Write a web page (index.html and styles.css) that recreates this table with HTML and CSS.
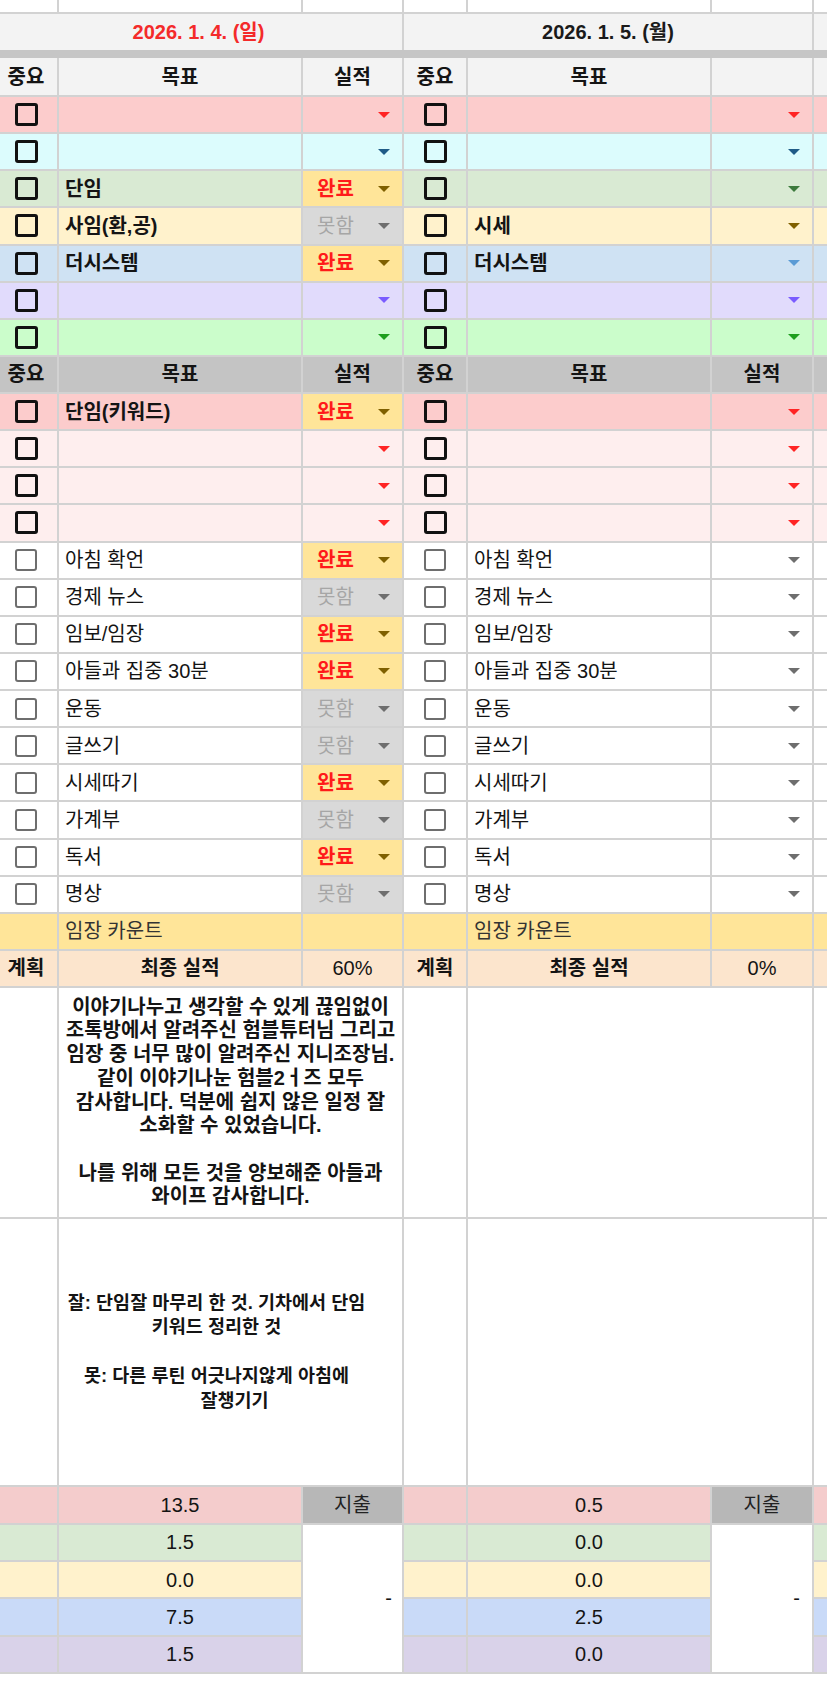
FILE: index.html
```html
<!DOCTYPE html>
<html lang="ko">
<head>
<meta charset="utf-8">
<title>Sheet</title>
<link rel="stylesheet" href="styles.css">
</head>
<body>
<div class="sheet">
  <div class="grid top">
    <div class="c"></div><div class="c"></div><div class="c"></div><div class="c"></div><div class="c"></div><div class="c"></div><div class="c"></div>
    <div class="c hd ctr span3 date sun">2026. 1. 4. (일)</div>
    <div class="c hd ctr span3 date">2026. 1. 5. (월)</div>
    <div class="c hd"></div>
  </div>
  <div class="bar"></div>
  <div class="grid main">
    <!-- header 1 -->
    <div class="c hd ctr b">중요</div><div class="c hd ctr b">목표</div><div class="c hd ctr b">실적</div>
    <div class="c hd ctr b">중요</div><div class="c hd ctr b">목표</div><div class="c hd"></div>
    <div class="c hd"></div>

    <!-- T1 pink -->
    <div class="c ck pk"><span class="cb"></span></div><div class="c pk"></div><div class="c st pk"><i class="tri t-red"></i></div>
    <div class="c ck pk"><span class="cb"></span></div><div class="c pk"></div><div class="c st pk"><i class="tri t-red"></i></div>
    <div class="c pk"></div>
    <!-- T2 cyan -->
    <div class="c ck cy"><span class="cb"></span></div><div class="c cy"></div><div class="c st cy"><i class="tri t-teal"></i></div>
    <div class="c ck cy"><span class="cb"></span></div><div class="c cy"></div><div class="c st cy"><i class="tri t-teal"></i></div>
    <div class="c cy"></div>
    <!-- T3 green -->
    <div class="c ck gr"><span class="cb"></span></div><div class="c gr goal b">단임</div><div class="c st yl"><span class="done">완료</span><i class="tri t-brn"></i></div>
    <div class="c ck gr"><span class="cb"></span></div><div class="c gr"></div><div class="c st gr"><i class="tri t-dgr"></i></div>
    <div class="c gr"></div>
    <!-- T4 yellow -->
    <div class="c ck ye"><span class="cb"></span></div><div class="c ye goal b">사임(환,공)</div><div class="c st gy"><span class="miss">못함</span><i class="tri t-gray"></i></div>
    <div class="c ck ye"><span class="cb"></span></div><div class="c ye goal b">시세</div><div class="c st ye"><i class="tri t-brn"></i></div>
    <div class="c ye"></div>
    <!-- T5 blue -->
    <div class="c ck bl"><span class="cb"></span></div><div class="c bl goal b">더시스템</div><div class="c st yl"><span class="done">완료</span><i class="tri t-brn"></i></div>
    <div class="c ck bl"><span class="cb"></span></div><div class="c bl goal b">더시스템</div><div class="c st bl"><i class="tri t-lbl"></i></div>
    <div class="c bl"></div>
    <!-- T6 purple -->
    <div class="c ck pu"><span class="cb"></span></div><div class="c pu"></div><div class="c st pu"><i class="tri t-vio"></i></div>
    <div class="c ck pu"><span class="cb"></span></div><div class="c pu"></div><div class="c st pu"><i class="tri t-vio"></i></div>
    <div class="c pu"></div>
    <!-- T7 light green -->
    <div class="c ck lg"><span class="cb"></span></div><div class="c lg"></div><div class="c st lg"><i class="tri t-grn"></i></div>
    <div class="c ck lg"><span class="cb"></span></div><div class="c lg"></div><div class="c st lg"><i class="tri t-grn"></i></div>
    <div class="c lg"></div>

    <!-- header 2 -->
    <div class="c h2 ctr b">중요</div><div class="c h2 ctr b">목표</div><div class="c h2 ctr b">실적</div>
    <div class="c h2 ctr b">중요</div><div class="c h2 ctr b">목표</div><div class="c h2 ctr b">실적</div>
    <div class="c h2"></div>

    <!-- P1 -->
    <div class="c ck pk"><span class="cb"></span></div><div class="c pk goal b">단임(키워드)</div><div class="c st yl"><span class="done">완료</span><i class="tri t-brn"></i></div>
    <div class="c ck pk"><span class="cb"></span></div><div class="c pk"></div><div class="c st pk"><i class="tri t-red"></i></div>
    <div class="c pk"></div>
    <!-- P2 -->
    <div class="c ck lp"><span class="cb"></span></div><div class="c lp"></div><div class="c st lp"><i class="tri t-red"></i></div>
    <div class="c ck lp"><span class="cb"></span></div><div class="c lp"></div><div class="c st lp"><i class="tri t-red"></i></div>
    <div class="c lp"></div>
    <!-- P3 -->
    <div class="c ck lp"><span class="cb"></span></div><div class="c lp"></div><div class="c st lp"><i class="tri t-red"></i></div>
    <div class="c ck lp"><span class="cb"></span></div><div class="c lp"></div><div class="c st lp"><i class="tri t-red"></i></div>
    <div class="c lp"></div>
    <!-- P4 -->
    <div class="c ck lp"><span class="cb"></span></div><div class="c lp"></div><div class="c st lp"><i class="tri t-red"></i></div>
    <div class="c ck lp"><span class="cb"></span></div><div class="c lp"></div><div class="c st lp"><i class="tri t-red"></i></div>
    <div class="c lp"></div>

    <!-- routines -->
    <div class="c ck"><span class="cb thin"></span></div><div class="c goal">아침 확언</div><div class="c st yl"><span class="done">완료</span><i class="tri t-brn"></i></div>
    <div class="c ck"><span class="cb thin"></span></div><div class="c goal">아침 확언</div><div class="c st"><i class="tri t-gray"></i></div>
    <div class="c"></div>

    <div class="c ck"><span class="cb thin"></span></div><div class="c goal">경제 뉴스</div><div class="c st gy"><span class="miss">못함</span><i class="tri t-gray"></i></div>
    <div class="c ck"><span class="cb thin"></span></div><div class="c goal">경제 뉴스</div><div class="c st"><i class="tri t-gray"></i></div>
    <div class="c"></div>

    <div class="c ck"><span class="cb thin"></span></div><div class="c goal">임보/임장</div><div class="c st yl"><span class="done">완료</span><i class="tri t-brn"></i></div>
    <div class="c ck"><span class="cb thin"></span></div><div class="c goal">임보/임장</div><div class="c st"><i class="tri t-gray"></i></div>
    <div class="c"></div>

    <div class="c ck"><span class="cb thin"></span></div><div class="c goal">아들과 집중 30분</div><div class="c st yl"><span class="done">완료</span><i class="tri t-brn"></i></div>
    <div class="c ck"><span class="cb thin"></span></div><div class="c goal">아들과 집중 30분</div><div class="c st"><i class="tri t-gray"></i></div>
    <div class="c"></div>

    <div class="c ck"><span class="cb thin"></span></div><div class="c goal">운동</div><div class="c st gy"><span class="miss">못함</span><i class="tri t-gray"></i></div>
    <div class="c ck"><span class="cb thin"></span></div><div class="c goal">운동</div><div class="c st"><i class="tri t-gray"></i></div>
    <div class="c"></div>

    <div class="c ck"><span class="cb thin"></span></div><div class="c goal">글쓰기</div><div class="c st gy"><span class="miss">못함</span><i class="tri t-gray"></i></div>
    <div class="c ck"><span class="cb thin"></span></div><div class="c goal">글쓰기</div><div class="c st"><i class="tri t-gray"></i></div>
    <div class="c"></div>

    <div class="c ck"><span class="cb thin"></span></div><div class="c goal">시세따기</div><div class="c st yl"><span class="done">완료</span><i class="tri t-brn"></i></div>
    <div class="c ck"><span class="cb thin"></span></div><div class="c goal">시세따기</div><div class="c st"><i class="tri t-gray"></i></div>
    <div class="c"></div>

    <div class="c ck"><span class="cb thin"></span></div><div class="c goal">가계부</div><div class="c st gy"><span class="miss">못함</span><i class="tri t-gray"></i></div>
    <div class="c ck"><span class="cb thin"></span></div><div class="c goal">가계부</div><div class="c st"><i class="tri t-gray"></i></div>
    <div class="c"></div>

    <div class="c ck"><span class="cb thin"></span></div><div class="c goal">독서</div><div class="c st yl"><span class="done">완료</span><i class="tri t-brn"></i></div>
    <div class="c ck"><span class="cb thin"></span></div><div class="c goal">독서</div><div class="c st"><i class="tri t-gray"></i></div>
    <div class="c"></div>

    <div class="c ck"><span class="cb thin"></span></div><div class="c goal">명상</div><div class="c st gy"><span class="miss">못함</span><i class="tri t-gray"></i></div>
    <div class="c ck"><span class="cb thin"></span></div><div class="c goal">명상</div><div class="c st"><i class="tri t-gray"></i></div>
    <div class="c"></div>

    <!-- count -->
    <div class="c yl"></div><div class="c yl goal soft">임장 카운트</div><div class="c yl"></div>
    <div class="c yl"></div><div class="c yl goal soft">임장 카운트</div><div class="c yl"></div>
    <div class="c yl"></div>

    <!-- final -->
    <div class="c or ctr b">계획</div><div class="c or ctr b">최종 실적</div><div class="c or ctr">60%</div>
    <div class="c or ctr b">계획</div><div class="c or ctr b">최종 실적</div><div class="c or ctr">0%</div>
    <div class="c or"></div>

    <!-- memo 1 -->
    <div class="c"></div>
    <div class="c span2 memo">이야기나누고 생각할 수 있게 끊임없이<br>조톡방에서 알려주신 험블튜터님 그리고<br>임장 중 너무 많이 알려주신 지니조장님.<br>같이 이야기나눈 험블2ㅓ즈 모두<br>감사합니다. 덕분에 쉽지 않은 일정 잘<br>소화할 수 있었습니다.<br><br>나를 위해 모든 것을 양보해준 아들과<br>와이프 감사합니다.</div>
    <div class="c"></div>
    <div class="c span2"></div>
    <div class="c"></div>

    <!-- memo 2 -->
    <div class="c"></div>
    <div class="c span2 memo m2"><div class="lines">잘: 단임잘 마무리 한 것. 기차에서 단임<br>키워드 정리한 것<br><br>못: 다른 루틴 어긋나지않게 아침에<br><span class="indent">잘챙기기</span></div></div>
    <div class="c"></div>
    <div class="c span2"></div>
    <div class="c"></div>

    <!-- expenses -->
    <div class="c ep"></div><div class="c ep ctr">13.5</div><div class="c ex ctr">지출</div>
    <div class="c ep"></div><div class="c ep ctr">0.5</div><div class="c ex ctr">지출</div>
    <div class="c ep"></div>

    <div class="c gr"></div><div class="c gr ctr">1.5</div><div class="c dash">-</div>
    <div class="c gr"></div><div class="c gr ctr">0.0</div><div class="c dash dash2">-</div>
    <div class="c gr"></div>

    <div class="c ye"></div><div class="c ye ctr">0.0</div>
    <div class="c ye"></div><div class="c ye ctr">0.0</div>
    <div class="c ye"></div>

    <div class="c eb"></div><div class="c eb ctr">7.5</div>
    <div class="c eb"></div><div class="c eb ctr">2.5</div>
    <div class="c eb"></div>

    <div class="c epu"></div><div class="c epu ctr">1.5</div>
    <div class="c epu"></div><div class="c epu ctr">0.0</div>
    <div class="c epu"></div>
  </div>
</div>
</body>
</html>
```

FILE: styles.css
```css
html, body {
  margin: 0;
  padding: 0;
  background: #ffffff;
}
body {
  width: 827px;
  height: 1694px;
  overflow: hidden;
  font-family: "Liberation Sans", "Noto Sans CJK KR", sans-serif;
  font-size: 20px;
  color: #141414;
}
.sheet {
  display: flex;
  flex-direction: column;
  margin-left: -5px;
  width: 881px;
}
.grid {
  display: grid;
  grid-template-columns: 62px 242px 99px 62px 242px 100px 62px;
  gap: 2px;
  background: #d2d2d2;
}
.top {
  grid-template-rows: 12px 36px;
}
.bar {
  height: 8px;
  background: #c6c6c6;
}
.main {
  grid-template-rows: 37px repeat(24, 35.14px) 228.9px 266.4px repeat(5, 35.32px);
  padding-bottom: 2px;
}
.c {
  background: #ffffff;
  display: flex;
  align-items: center;
  min-width: 0;
  overflow: hidden;
  white-space: nowrap;
  line-height: 1.2;
}
.ctr { justify-content: center; }
.b { font-weight: bold; }
.span2 { grid-column: span 2; }
.span3 { grid-column: span 3; }

.hd { background: #f3f3f3; }
.h2 { background: #c4c4c4; }
.date { font-weight: bold; color: #1a1a1a; }
.sun { color: #f42a2a; }

.pk { background: #fccccc; }
.cy { background: #dcfcfd; }
.gr { background: #d9ead3; }
.ye { background: #fff2cc; }
.bl { background: #cfe2f3; }
.pu { background: #e1dbfc; }
.lg { background: #cbfdcb; }
.lp { background: #feeeee; }
.yl { background: #ffe599; }
.gy { background: #d9d9d9; }
.or { background: #fce5cd; }
.ep { background: #f4cccc; }
.eb { background: #c9daf8; }
.epu { background: #d9d2e9; }
.ex { background: #b7b7b7; color: #222; }

.ck { justify-content: center; }
.cb {
  width: 23px;
  height: 23px;
  box-sizing: border-box;
  border: 3px solid #111;
  border-radius: 3px;
}
.cb.thin {
  width: 22px;
  height: 22px;
  border: 2px solid #6e6e6e;
}

.goal { padding-left: 6px; }
.soft { color: #333; }

.st {
  padding: 0 12px 0 14px;
}
.done { color: #ff1a1a; font-weight: bold; }
.miss { color: #a6a6a6; }
.tri {
  margin-left: auto;
  width: 0;
  height: 0;
  border-left: 6px solid transparent;
  border-right: 6px solid transparent;
  border-top: 6px solid currentColor;
}
.t-red { color: #ff2424; }
.t-teal { color: #1f5b87; }
.t-brn { color: #7f6000; }
.t-gray { color: #6e6e6e; }
.t-dgr { color: #3d7a3d; }
.t-lbl { color: #5b9bd5; }
.t-vio { color: #7a5cff; }
.t-grn { color: #1e9e1e; }

.memo {
  justify-content: center;
  text-align: center;
  font-weight: bold;
  line-height: 23.7px;
  white-space: nowrap;
}
.m2 {
  font-size: 18.5px;
  line-height: 24.5px;
  padding-right: 28px;
}
.indent {
  display: inline-block;
  padding-left: 36px;
}
.dash {
  grid-row: span 4;
  justify-content: flex-end;
  padding-right: 10px;
}
.dash2 { padding-right: 12px; }
```
